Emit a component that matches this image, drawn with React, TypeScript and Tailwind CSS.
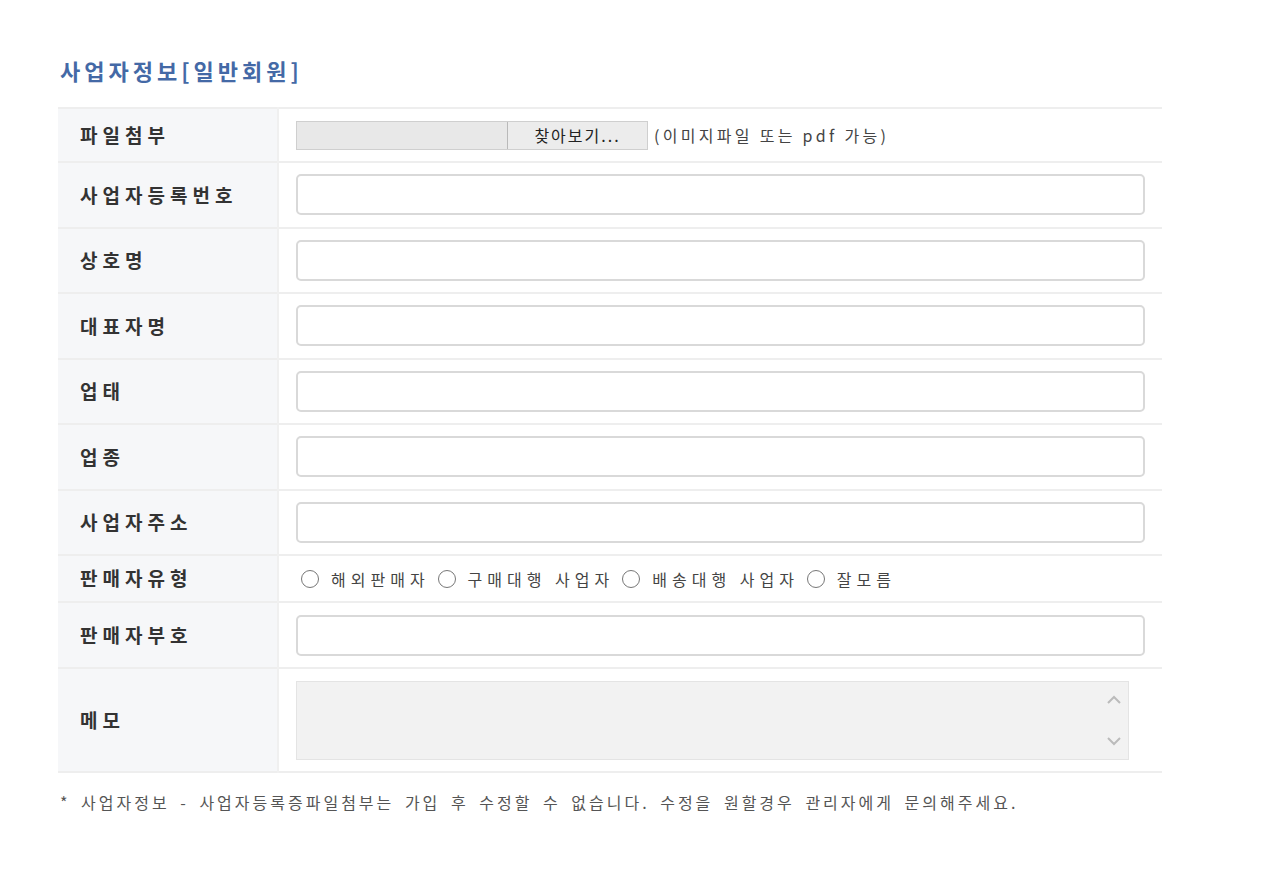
import React from "react";

const font = { fontFamily: '"Noto Sans CJK KR", "Noto Sans", sans-serif' };

const textRows = ["사업자등록번호", "상호명", "대표자명", "업태", "업종", "사업자주소"];
const sellerTypes = ["해외판매자", "구매대행 사업자", "배송대행 사업자", "잘모름"];

const labelCell = "w-[220px] bg-[#f6f7f9] pl-[22px] text-left align-middle text-[19px] font-bold tracking-[5px] text-[#333] border-r-2 border-[#f0f0f0]";
const valueCell = "px-[17px] align-middle";
const rowClass = "border-b-2 border-[#eeeeee]";
const inputClass = "block w-full h-[41px] rounded-[5px] border-2 border-[#d9d9d9] bg-white px-2 text-[14px] outline-none";

export default function App() {
  return (
    <div className="min-h-[876px] bg-white text-[#333]" style={font}>
      <div className="pl-[58px] pt-[55px] w-[1162px]">
        <h2 className="pl-[2px] text-[22px] font-semibold leading-[30px] text-[#4469a6] tracking-[4px]">
          사업자정보[일반회원]
        </h2>

        <table className="mt-[22px] w-[1104px] border-collapse border-t-2 border-[#eeeeee]">
          <tbody>
            {/* File attachment */}
            <tr className={`${rowClass} h-[54px]`}>
              <th className={labelCell}>파일첨부</th>
              <td className={valueCell}>
                <div className="flex items-center">
                  <div className="flex h-[29px] w-[352px] border border-[#cfcfcf] bg-[#e8e8e8]">
                    <div className="flex-1" />
                    <button
                      type="button"
                      className="w-[140px] border-l border-[#b9b9b9] bg-[#ececec] text-[16px] tracking-[2px] text-[#222]"
                    >
                      찾아보기...
                    </button>
                  </div>
                  <span className="ml-[6px] text-[16px] tracking-[3.3px] text-[#444]">(이미지파일 또는 pdf 가능)</span>
                </div>
              </td>
            </tr>

            {textRows.map(label => (
              <tr key={label} className={`${rowClass} h-[65.5px]`}>
                <th className={labelCell}>{label}</th>
                <td className={valueCell}>
                  <input type="text" className={inputClass} />
                </td>
              </tr>
            ))}

            {/* Seller type */}
            <tr className={`${rowClass} h-[47px]`}>
              <th className={labelCell}>판매자유형</th>
              <td className={valueCell}>
                <div className="flex items-center pl-[5px] text-[16px] tracking-[5px] text-[#444]">
                  {sellerTypes.map(t => (
                    <label key={t} className="mr-[8px] flex items-center">
                      <span className="mr-[12px] inline-block h-[18px] w-[18px] rounded-full border-[1.5px] border-[#777] bg-white" />
                      {t}
                    </label>
                  ))}
                </div>
              </td>
            </tr>

            <tr className={`${rowClass} h-[66px]`}>
              <th className={labelCell}>판매자부호</th>
              <td className={valueCell}>
                <input type="text" className={inputClass} />
              </td>
            </tr>

            {/* Memo */}
            <tr className={`${rowClass} h-[104px]`}>
              <th className={labelCell}>메모</th>
              <td className={valueCell}>
                <div className="relative h-[79px] w-[833px] border border-[#e4e4e4] bg-[#f2f2f2]">
                  <div className="absolute right-0 top-0 flex h-full w-[28px] flex-col items-center justify-between py-[13px] text-[#bbb]">
                    <svg width="16" height="10" viewBox="0 0 16 10" fill="none" stroke="currentColor" strokeWidth="2">
                      <path d="M2 8 L8 2 L14 8" />
                    </svg>
                    <svg width="16" height="10" viewBox="0 0 16 10" fill="none" stroke="currentColor" strokeWidth="2">
                      <path d="M2 2 L8 8 L14 2" />
                    </svg>
                  </div>
                </div>
              </td>
            </tr>
          </tbody>
        </table>

        <p className="mt-[17px] pl-[2px] text-[16px] tracking-[3px] [word-spacing:4px] text-[#555]">
          * 사업자정보 - 사업자등록증파일첨부는 가입 후 수정할 수 없습니다. 수정을 원할경우 관리자에게 문의해주세요.
        </p>
      </div>
    </div>
  );
}
